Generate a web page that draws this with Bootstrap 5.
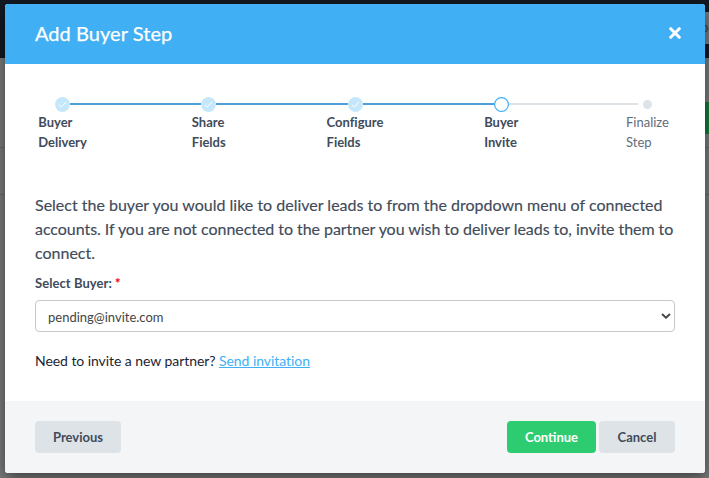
<!DOCTYPE html>
<html lang="en">
<head>
<meta charset="utf-8">
<meta name="viewport" content="width=device-width, initial-scale=1">
<title>Add Buyer Step</title>
<link href="https://cdn.jsdelivr.net/npm/bootstrap@5.3.0/dist/css/bootstrap.min.css" rel="stylesheet">
<style>
body{font-family:Lato,"Open Sans",sans-serif;font-variant-ligatures:none;background:#7a7b7b;height:478px;overflow:hidden;color:#414b5a}
.page-top{height:58px;background:#131822;padding-top:12px}
.page-search{width:19px;height:32px;background:#7c7d7f;color:#3b3c3e;font-size:13px;line-height:30px;padding-left:11px}
.page-actions{height:90px;padding-top:44px;border-bottom:1px solid #6a6a6a}
.page-add{width:19px;height:32px;background:#157a3b}
.page-row{height:47px;border-bottom:1px solid #6a6a6a}
.dialog-layer{inset:4px 4px auto 5px;position:absolute}
.modal-content{height:469px;border:0;border-radius:3px;box-shadow:0 5px 15px rgba(0,0,0,.5);overflow:hidden;background:#fff;color:#414b5a}
.modal-header{height:60px;background:#40aff3;border:0;border-radius:0;padding:0 24px 0 30px}
.modal-title{font-size:20px;line-height:24px;color:#fff;letter-spacing:.05px;padding-bottom:2px;-webkit-text-stroke:.25px #fff}
.x-close{width:12px;height:12px;margin-bottom:2px}
.modal-body{padding:32px 30px 0}
.track{padding:0 20px;height:16px}
.dot{width:15px;height:15px;flex:none}
.rail{width:131px;height:2px;background:#4f9fda}
.rail-next{width:129px;background:#dee3e7;margin-right:2px}
.labels{margin:0 -17.5px;font-size:13px;line-height:20px;font-weight:700}
.labels>div{width:90px}
.labels span{display:inline-block;text-align:left}
.labels .upcoming{font-weight:400;color:#5f6d7c}
.intro{font-size:16px;line-height:24px;margin:41px -10px 0 0;-webkit-text-stroke:.15px #414b5a}
.intro span{display:block;white-space:nowrap}
.intro .long-line{letter-spacing:-.05px}
.pick-label{font-size:13px;line-height:20px;font-weight:700;margin-top:8px;letter-spacing:.06px}
.pick-label b{color:#f00}
.form-select{height:32px;margin-top:7px;border:1px solid #c7c9ca;border-radius:4px;padding:7px 30px 7px 12px;font-size:13px;line-height:18px;color:#444;
background-color:#fff;background-image:url("data:image/svg+xml,%3Csvg xmlns='http://www.w3.org/2000/svg' viewBox='0 0 10 6'%3E%3Cpath d='M1 1l4 3.7L9 1' fill='none' stroke='%23484848' stroke-width='2'/%3E%3C/svg%3E");background-size:10px 6px;background-position:right 3px center}
.invite{font-size:14px;line-height:20px;margin-top:19px;color:#1c2430;letter-spacing:-.06px}
.invite a{color:#40aff3}
.modal-footer{height:72px;background:#f4f5f7;border:0;border-radius:0;padding:0 30px;gap:3px}
.modal-footer>*{margin:0}
.modal-footer .btn{height:32px;border:0;border-radius:4px;padding:0;font-size:13px;font-weight:700;line-height:31px;background:#dee3e7;color:#414b5a}
.modal-footer .b-prev{width:86px}
.modal-footer .b-cancel{width:76px}
.modal-footer .b-go{width:89px;background:#2ecc71;color:#fff}
</style>
</head>
<body>
<div class="page-top d-flex justify-content-end"><div class="page-search">o</div></div>
<div class="page-actions d-flex justify-content-end"><div class="page-add"></div></div>
<div class="page-row"></div>

<div class="dialog-layer">
<div class="modal-content">
  <div class="modal-header d-flex align-items-center justify-content-between">
    <h1 class="modal-title fw-normal">Add Buyer Step</h1>
    <svg class="x-close" viewBox="0 0 12 12"><path d="M1.7 1.7l8.6 8.6M10.3 1.7l-8.6 8.6" stroke="#fff" stroke-width="3" stroke-linecap="round"/></svg>
  </div>
  <div class="modal-body">
    <div class="track d-flex align-items-center">
      <svg class="dot" viewBox="0 0 15 15"><circle cx="7.5" cy="7.5" r="7.4" fill="#c5e7fb"/><path d="M3.8 7.6l2.5 2.4 4.7-5" fill="none" stroke="#fff"/></svg>
      <div class="rail flex-fill"></div>
      <svg class="dot" viewBox="0 0 15 15"><circle cx="7.5" cy="7.5" r="7.4" fill="#c5e7fb"/><path d="M3.8 7.6l2.5 2.4 4.7-5" fill="none" stroke="#fff"/></svg>
      <div class="rail flex-fill"></div>
      <svg class="dot" viewBox="0 0 15 15"><circle cx="7.5" cy="7.5" r="7.4" fill="#c5e7fb"/><path d="M3.8 7.6l2.5 2.4 4.7-5" fill="none" stroke="#fff"/></svg>
      <div class="rail flex-fill"></div>
      <svg class="dot" viewBox="0 0 15 15"><circle cx="7.5" cy="7.5" r="6.9" fill="#fff" stroke="#40aff3" stroke-width="1.2"/></svg>
      <div class="rail rail-next flex-fill"></div>
      <svg class="dot" viewBox="0 0 15 15"><circle cx="7.5" cy="7.5" r="4.5" fill="#dee3e7"/></svg>
    </div>
    <div class="labels d-flex justify-content-between text-center">
      <div><span>Buyer<br>Delivery</span></div>
      <div><span>Share<br>Fields</span></div>
      <div><span>Configure<br>Fields</span></div>
      <div><span>Buyer<br>Invite</span></div>
      <div class="upcoming"><span>Finalize<br>Step</span></div>
    </div>
    <p class="intro mb-0"><span>Select the buyer you would like to deliver leads to from the dropdown menu of connected</span><span class="long-line">accounts. If you are not connected to the partner you wish to deliver leads to, invite them to</span><span>connect.</span></p>
    <label class="pick-label d-block" for="buyer">Select Buyer: <b>*</b></label>
    <select class="form-select" id="buyer"><option>pending@invite.com</option></select>
    <div class="invite">Need to invite a new partner? <a href="#">Send invitation</a></div>
  </div>
  <div class="modal-footer d-flex align-items-center">
    <button class="btn b-prev me-auto" type="button">Previous</button>
    <button class="btn b-go" type="button">Continue</button>
    <button class="btn b-cancel" type="button">Cancel</button>
  </div>
</div>
</div>
<script src="https://cdn.jsdelivr.net/npm/bootstrap@5.3.0/dist/js/bootstrap.bundle.min.js"></script>
</body>
</html>
